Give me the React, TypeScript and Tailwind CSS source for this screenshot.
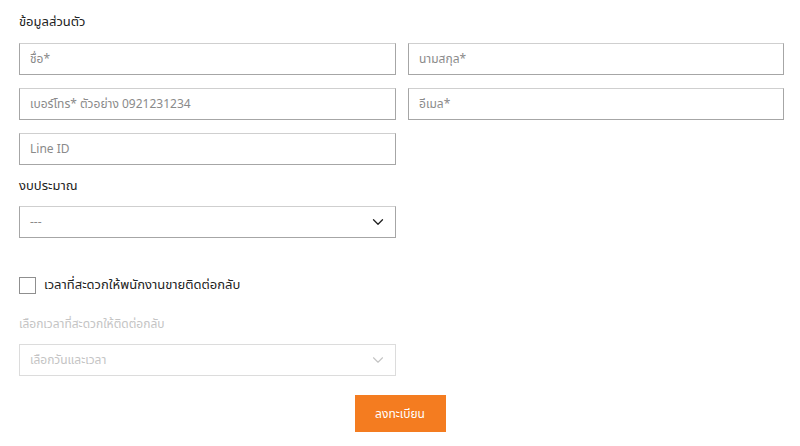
import { ChevronDown } from "lucide-react";

const font = { fontFamily: '"Noto Sans Thai", "Noto Sans", "DejaVu Sans", sans-serif' };

function Field({ placeholder }: { placeholder: string }) {
  return (
    <div className="flex h-[32px] items-center border border-[#a6a6a6] border-t-[#cfcfcf] bg-white px-[10px] text-[12px] text-[#8a8a8a]">
      {placeholder}
    </div>
  );
}

export default function App() {
  return (
    <div className="min-h-[446px] w-[800px] bg-white" style={font}>
      <div className="flex flex-col px-[19px] pt-[12px]">
        <h2 className="text-[13px] leading-[20px] text-[#222]">ข้อมูลส่วนตัว</h2>

        <div className="mt-[11px] grid grid-cols-[377px_376px] gap-x-[12px] gap-y-[13px]">
          <Field placeholder="ชื่อ*" />
          <Field placeholder="นามสกุล*" />
          <Field placeholder="เบอร์โทร* ตัวอย่าง 0921231234" />
          <Field placeholder="อีเมล*" />
          <Field placeholder="Line ID" />
        </div>

        <div className="mt-[11px] text-[13px] leading-[20px] text-[#222]">งบประมาณ</div>
        <div className="mt-[10px] flex h-[32px] w-[377px] items-center justify-between border border-[#a6a6a6] border-t-[#cfcfcf] bg-white pl-[10px] pr-[8px] text-[12px] text-[#8a8a8a]">
          <span>---</span>
          <ChevronDown className="h-[18px] w-[18px] text-[#222]" strokeWidth={1.75} />
        </div>

        <label className="mt-[37px] flex items-center gap-[8px]">
          <span className="h-[17px] w-[17px] border border-[#8f8f8f] bg-white" />
          <span className="text-[13px] leading-[20px] text-[#222]">เวลาที่สะดวกให้พนักงานขายติดต่อกลับ</span>
        </label>

        <div className="mt-[19px] text-[12px] leading-[20px] text-[#c4c4c4]">เลือกเวลาที่สะดวกให้ติดต่อกลับ</div>
        <div className="mt-[10px] flex h-[32px] w-[377px] items-center justify-between border border-[#dcdcdc] bg-white pl-[10px] pr-[8px] text-[12px] text-[#c4c4c4]">
          <span>เลือกวันและเวลา</span>
          <ChevronDown className="h-[18px] w-[18px] text-[#c4c4c4]" strokeWidth={1.5} />
        </div>

        <div className="mt-[19px] flex justify-center">
          <button className="h-[37px] w-[91px] bg-[#f47c20] text-[12px] text-white">ลงทะเบียน</button>
        </div>
      </div>
    </div>
  );
}
